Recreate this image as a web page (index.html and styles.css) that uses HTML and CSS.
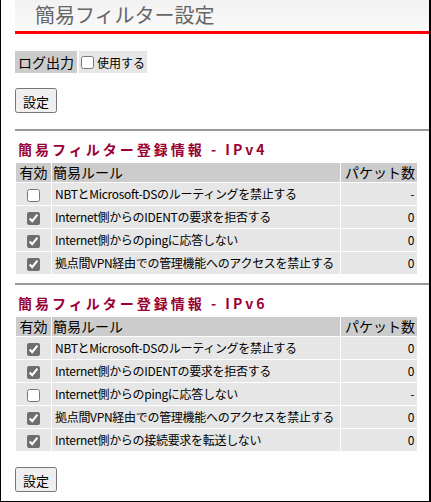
FILE: index.html
```html
<!DOCTYPE html>
<html lang="ja">
<head>
    <meta charset="UTF-8">
    <title>簡易フィルター設定</title>
    <link rel="stylesheet" href="styles.css">
</head>
<body>
    <main>
        <h1>簡易フィルター設定</h1>
        <table class="opcao">
            <tr>
                <th>ログ出力</th>
                <td><label><input type="checkbox">使用する</label></td>
            </tr>
        </table>
        <div class="botoeira"><button>設定</button></div>
        <hr>
        <h2>簡易フィルター登録情報 - IPv4</h2>
        <table class="regras">
            <tr><th class="ativo">有効</th><th>簡易ルール</th><th class="num">パケット数</th></tr>
            <tr><td class="ativo"><input type="checkbox"></td><td>NBTとMicrosoft-DSのルーティングを禁止する</td><td class="num">-</td></tr>
            <tr><td class="ativo"><input type="checkbox" checked></td><td>Internet側からのIDENTの要求を拒否する</td><td class="num">0</td></tr>
            <tr><td class="ativo"><input type="checkbox" checked></td><td>Internet側からのpingに応答しない</td><td class="num">0</td></tr>
            <tr><td class="ativo"><input type="checkbox" checked></td><td>拠点間VPN経由での管理機能へのアクセスを禁止する</td><td class="num">0</td></tr>
        </table>
        <hr>
        <h2>簡易フィルター登録情報 - IPv6</h2>
        <table class="regras">
            <tr><th class="ativo">有効</th><th>簡易ルール</th><th class="num">パケット数</th></tr>
            <tr><td class="ativo"><input type="checkbox" checked></td><td>NBTとMicrosoft-DSのルーティングを禁止する</td><td class="num">0</td></tr>
            <tr><td class="ativo"><input type="checkbox" checked></td><td>Internet側からのIDENTの要求を拒否する</td><td class="num">0</td></tr>
            <tr><td class="ativo"><input type="checkbox"></td><td>Internet側からのpingに応答しない</td><td class="num">-</td></tr>
            <tr><td class="ativo"><input type="checkbox" checked></td><td>拠点間VPN経由での管理機能へのアクセスを禁止する</td><td class="num">0</td></tr>
            <tr><td class="ativo"><input type="checkbox" checked></td><td>Internet側からの接続要求を転送しない</td><td class="num">0</td></tr>
        </table>
        <div class="botoeira"><button>設定</button></div>
    </main>
</body>
</html>
```

FILE: styles.css
```css
* {
    font-family: "Noto Sans CJK JP", "DejaVu Sans", sans-serif;
    box-sizing: border-box;
}
html, body {
    height: 100%;
}
body {
    margin: 0;
    background: #fefefe;
    border-left: 1px solid #000;
    border-right: 2px solid #000;
    border-bottom: 1px solid #000;
}
main {
    padding: 0 0 0 14px;
    font-size: 13px;
    color: #000;
}
h1 {
    margin: 0;
    padding: 0 0 0 20px;
    height: 34px;
    line-height: 30px;
    font-size: 20px;
    font-weight: normal;
    color: #666;
    background: linear-gradient(#f2f2f2, #fafafa);
    border-bottom: 3px solid #f00;
}
.opcao {
    margin-top: 17px;
    border-spacing: 0;
}
.opcao th, .opcao td {
    height: 22px;
    padding: 0 2px;
    font-weight: normal;
}
.opcao th {
    background: #ccc;
    font-size: 14px;
    padding: 0 3px;
    border-right: 2px solid #fefefe;
}
.opcao td {
    background: #e6e6e6;
    font-size: 12px;
}
.opcao label {
    display: flex;
    align-items: center;
}
.opcao input {
    margin: 0 3px 0 0;
    width: 13px;
    height: 13px;
}
.botoeira {
    margin: 15px 0 16px;
}
.botoeira button {
    font-size: 13px;
    padding: 2px 6px;
    height: 25px;
}
hr {
    margin: 8px 0 0;
    border: none;
    border-top: 2px solid #999;
}
.botoeira + hr {
    margin-top: 0;
}
h2 {
    margin: 8px 0 3px 3px;
    font-size: 14px;
    letter-spacing: 3px;
    color: #990033;
}
.regras {
    border-spacing: 1px;
    width: 403px;
    table-layout: fixed;
}
.regras th {
    background: #ccc;
    font-weight: normal;
    font-size: 14px;
    text-align: left;
    padding: 0 1px;
    height: 19px;
    line-height: 17px;
}
.regras td {
    background: #e6e6e6;
    font-size: 12px;
    letter-spacing: -0.3px;
    white-space: nowrap;
    overflow: hidden;
    height: 22px;
    line-height: 16px;
    padding: 0 3px;
}
.regras .ativo {
    width: 35px;
    text-align: center;
}
.regras .num {
    width: 76px;
    text-align: right;
}
.regras th.num {
    padding-right: 2px;
}
input[type="checkbox"] {
    accent-color: #6e6e6e;
}
.regras input {
    margin: 0;
    width: 13px;
    height: 13px;
    vertical-align: middle;
}
```
